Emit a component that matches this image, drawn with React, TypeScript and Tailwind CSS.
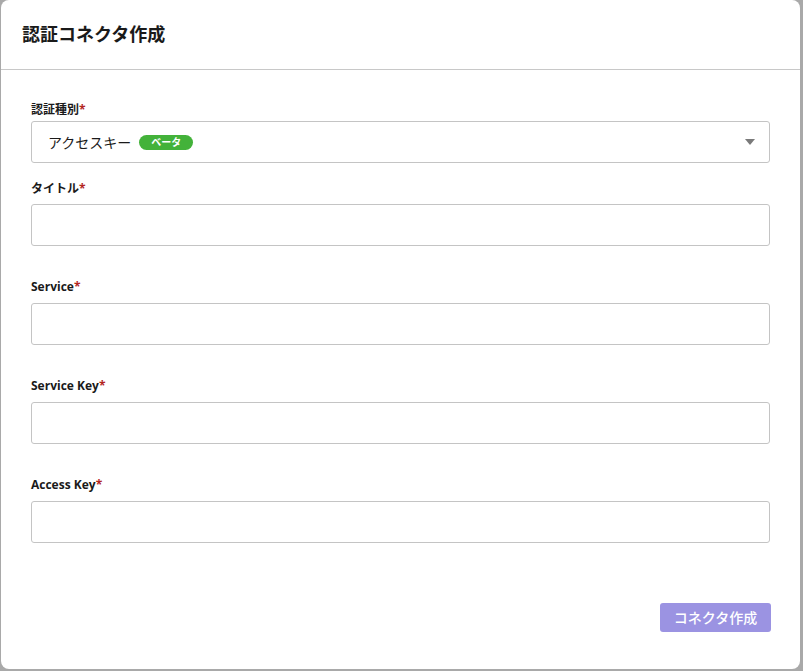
import React from 'react';

const font = { fontFamily: '"Open Sans", "Noto Sans CJK JP", sans-serif' };

function Label({ text, className = '' }: { text: string; className?: string }) {
	return (
		<div className={`text-[12px] leading-4 font-bold text-[#1a1a1a] ${className}`}>
			{text}
			<span className="text-[#b3261e]">*</span>
		</div>
	);
}

function TextField() {
	return <div className="h-[42px] rounded-[3px] border border-[#c4c4c4] bg-white" />;
}

export default function App() {
	return (
		<div className="w-[803px] h-[671px] bg-[#a9a9a9] pl-px pr-[3px] pb-[2px]" style={font}>
			<div className="h-full bg-white rounded-lg flex flex-col">
				<div className="h-[70px] flex items-center pl-[21px] border-b border-[#c8c8c8] shrink-0">
					<h1 className="text-[18px] font-bold text-[#1a1a1a]">認証コネクタ作成</h1>
				</div>
				<div className="flex-1 px-[30px] pt-[32px] flex flex-col">
					<Label text="認証種別" className="mb-[3px]" />
					<div className="h-[42px] rounded-[3px] border border-[#c4c4c4] flex items-center pl-[16px] pr-[14px]">
						<span className="text-[14px] text-[#1a1a1a]">アクセスキー</span>
						<span className="ml-[8px] h-[15px] px-[12px] rounded-full bg-[#43b23a] text-white text-[10px] font-bold leading-[15px]">
							ベータ
						</span>
						<svg className="ml-auto" width="10" height="6" viewBox="0 0 10 6">
							<path d="M0 0h10L5 6z" fill="#7a7a7a" />
						</svg>
					</div>

					<Label text="タイトル" className="mt-[18px] mb-[7px]" />
					<TextField />

					<Label text="Service" className="mt-[33px] mb-[8px]" />
					<TextField />

					<Label text="Service Key" className="mt-[33px] mb-[8px]" />
					<TextField />

					<Label text="Access Key" className="mt-[33px] mb-[8px]" />
					<TextField />

					<div className="flex justify-end mt-[60px] -mr-px">
						<button className="w-[111px] h-[29px] rounded-[3px] bg-[#9b93e2] text-white text-[14px] font-medium">
							コネクタ作成
						</button>
					</div>
				</div>
			</div>
		</div>
	);
}
